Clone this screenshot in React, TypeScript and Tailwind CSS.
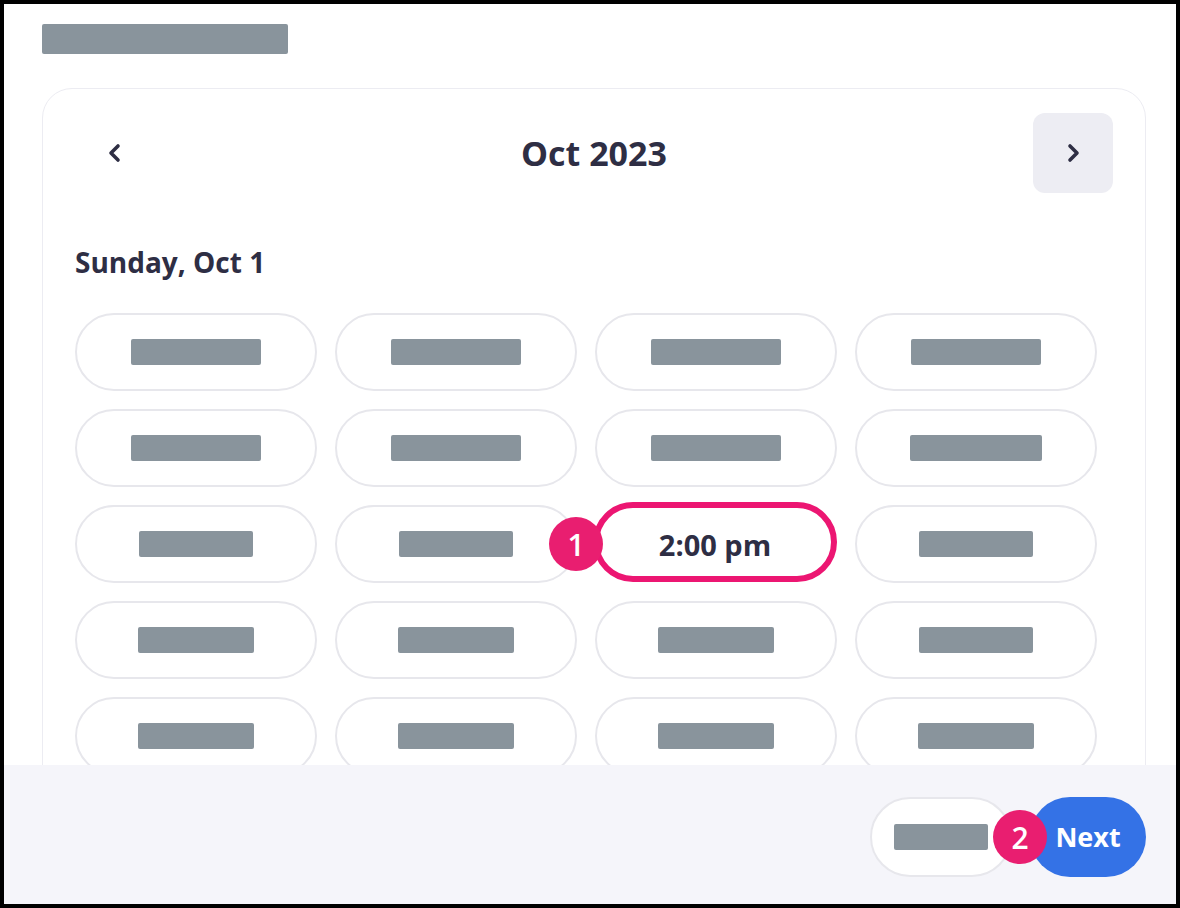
const slotBars = [
  [130, 130, 130, 130],
  [130, 130, 130, 132],
  [114, 114, 0, 114],
  [116, 116, 116, 114],
  [116, 116, 116, 116],
];

function Chevron({ dir }: { dir: "left" | "right" }) {
  return (
    <svg width="16" height="24" viewBox="0 0 16 24" fill="none">
      <polyline
        points={dir === "left" ? "11,5 4,12 11,19" : "5,5 12,12 5,19"}
        stroke="#2e2e44"
        strokeWidth="3.6"
        strokeLinecap="round"
        strokeLinejoin="round"
      />
    </svg>
  );
}

function Badge({ n, className }: { n: number; className: string }) {
  return (
    <span
      className={`absolute flex h-[54px] w-[54px] items-center justify-center rounded-full bg-[#e91e70] text-[30px] font-semibold text-white ${className}`}
    >
      {n}
    </span>
  );
}

export default function App() {
  return (
    <div className="h-[908px] w-[1180px] bg-black p-1 font-['Open_Sans','Lato',sans-serif] text-[#2e2e44]">
      <div className="flex h-full flex-col overflow-hidden bg-white">
        <div className="h-[761px] overflow-hidden px-[38px] pt-5">
          <div className="h-[30px] w-[246px] rounded-[2px] bg-[#89949c]" />
          <div className="mt-[34px] w-[1104px] rounded-[30px] border border-[#ececf2] px-8 pt-6 pb-10">
            <div className="flex h-20 items-center justify-between">
              <button className="flex h-20 w-20 items-center justify-center rounded-xl">
                <Chevron dir="left" />
              </button>
              <span className="text-[34px] font-bold">Oct 2023</span>
              <button className="flex h-20 w-20 items-center justify-center rounded-xl bg-[#ededf3]">
                <Chevron dir="right" />
              </button>
            </div>
            <h2 className="mt-[52px] text-[28px] leading-[34px] font-bold">Sunday, Oct 1</h2>
            <div className="mt-[34px] grid grid-cols-4 gap-[18px] pr-[16px]">
              {slotBars.flatMap((row, r) =>
                row.map((w, c) =>
                  w === 0 ? (
                    <div
                      key={`${r}-${c}`}
                      className="relative -mt-[3px] -ml-[2px] flex h-[80px] items-center justify-center rounded-full border-[6px] border-[#ec1672] bg-white pt-[5px]"
                    >
                      <span className="text-[29px] leading-none font-bold">2:00 pm</span>
                      <Badge n={1} className="top-[9px] left-[-50px]" />
                    </div>
                  ) : (
                    <div
                      key={`${r}-${c}`}
                      className="flex h-[78px] items-center justify-center rounded-full border-2 border-[#e7e7ec]"
                    >
                      <div className="h-[26px] rounded-[2px] bg-[#89949c]" style={{ width: w }} />
                    </div>
                  ),
                ),
              )}
            </div>
          </div>
        </div>
        <div className="flex flex-1 items-start justify-end gap-[18px] bg-[#f5f5fa] pt-8 pr-[30px]">
          <button className="flex h-20 w-[142px] items-center justify-center rounded-full border-2 border-[#e7e7ec] bg-white">
            <div className="h-[26px] w-[94px] rounded-[2px] bg-[#89949c]" />
          </button>
          <button className="relative flex h-20 w-[116px] items-center justify-center rounded-full bg-[#3472e6] text-[27px] font-bold text-white">
            Next
            <Badge n={2} className="top-[13px] left-[-37px]" />
          </button>
        </div>
      </div>
    </div>
  );
}
